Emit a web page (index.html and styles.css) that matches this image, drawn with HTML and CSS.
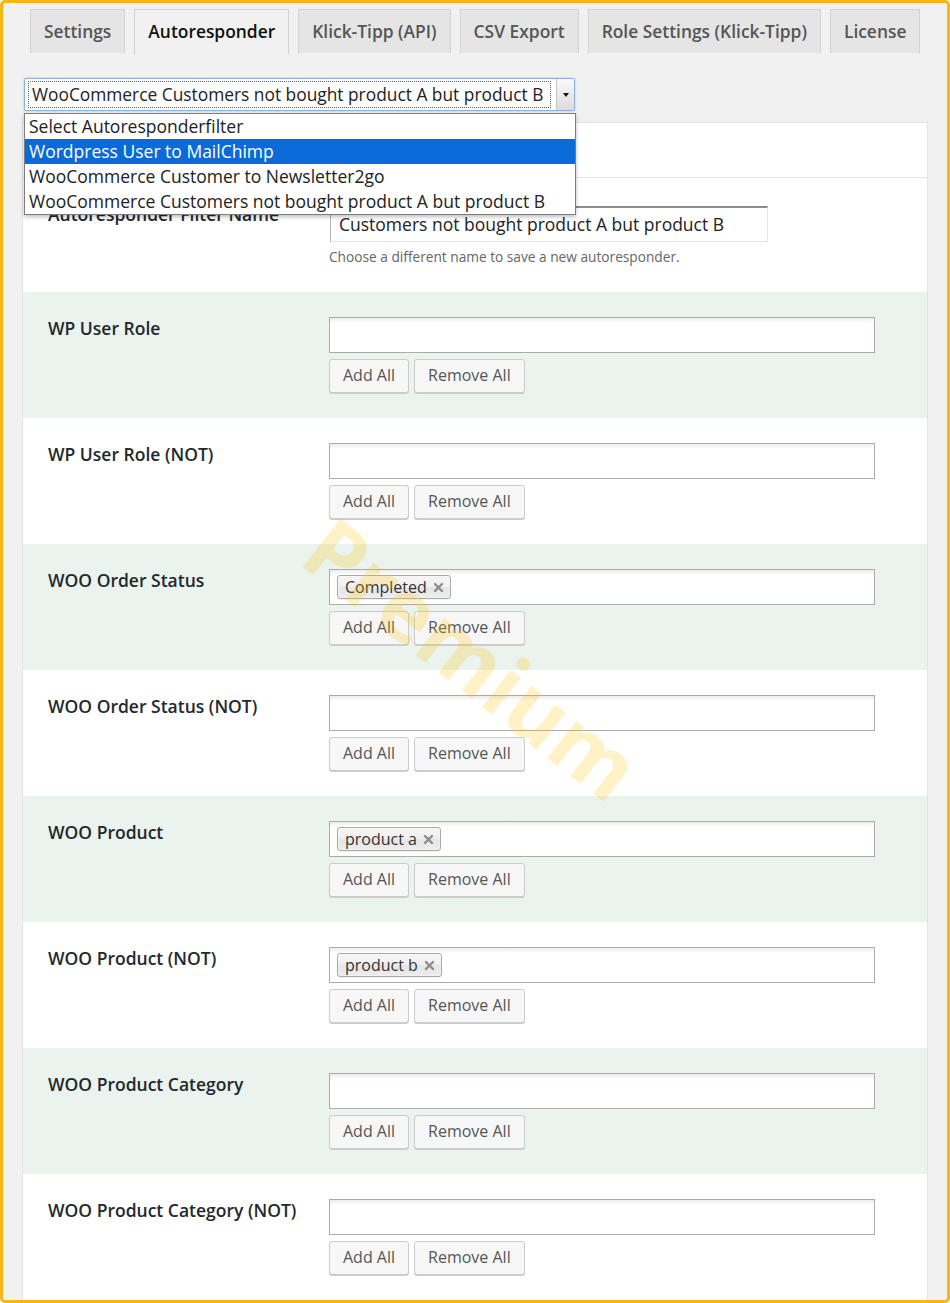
FILE: index.html
```html
<!DOCTYPE html>
<html>
<head>
<meta charset="utf-8">
<link rel="stylesheet" href="styles.css">
</head>
<body>
<div class="frame">
  <nav class="tabs">
    <span class="tab">Settings</span>
    <span class="tab active">Autoresponder</span>
    <span class="tab">Klick-Tipp (API)</span>
    <span class="tab">CSV Export</span>
    <span class="tab">Role Settings (Klick-Tipp)</span>
    <span class="tab">License</span>
  </nav>

  <div class="selector">
    <div class="select-box">
      <span class="select-value">WooCommerce Customers not bought product A but product B</span>
      <span class="select-arrow"><span class="tri"></span></span>
    </div>
    <ul class="dropdown">
      <li>Select Autoresponderfilter</li>
      <li class="hl">Wordpress User to MailChimp</li>
      <li>WooCommerce Customer to Newsletter2go</li>
      <li>WooCommerce Customers not bought product A but product B</li>
    </ul>
  </div>

  <div class="panel">
    <div class="panel-head"></div>

    <div class="row name-row">
      <div class="label">Autoresponder Filter Name</div>
      <div class="field">
        <div class="text-input">Customers not bought product A but product B</div>
        <p class="desc">Choose a different name to save a new autoresponder.</p>
      </div>
    </div>

    <div class="row alt">
      <div class="label">WP User Role</div>
      <div class="field">
        <div class="multi"></div>
        <div class="btns"><span class="btn">Add All</span><span class="btn">Remove All</span></div>
      </div>
    </div>

    <div class="row">
      <div class="label">WP User Role (NOT)</div>
      <div class="field">
        <div class="multi"></div>
        <div class="btns"><span class="btn">Add All</span><span class="btn">Remove All</span></div>
      </div>
    </div>

    <div class="row alt">
      <div class="label">WOO Order Status</div>
      <div class="field">
        <div class="multi"><span class="chip">Completed<svg class="x" width="11" height="11" viewBox="0 0 11 11"><path d="M2 2 L9 9 M9 2 L2 9" stroke="#8c8c8c" stroke-width="2.4" stroke-linecap="round"/></svg></span></div>
        <div class="btns"><span class="btn">Add All</span><span class="btn">Remove All</span></div>
      </div>
    </div>

    <div class="row">
      <div class="label">WOO Order Status (NOT)</div>
      <div class="field">
        <div class="multi"></div>
        <div class="btns"><span class="btn">Add All</span><span class="btn">Remove All</span></div>
      </div>
    </div>

    <div class="row alt">
      <div class="label">WOO Product</div>
      <div class="field">
        <div class="multi"><span class="chip">product a<svg class="x" width="11" height="11" viewBox="0 0 11 11"><path d="M2 2 L9 9 M9 2 L2 9" stroke="#8c8c8c" stroke-width="2.4" stroke-linecap="round"/></svg></span></div>
        <div class="btns"><span class="btn">Add All</span><span class="btn">Remove All</span></div>
      </div>
    </div>

    <div class="row">
      <div class="label">WOO Product (NOT)</div>
      <div class="field">
        <div class="multi"><span class="chip">product b<svg class="x" width="11" height="11" viewBox="0 0 11 11"><path d="M2 2 L9 9 M9 2 L2 9" stroke="#8c8c8c" stroke-width="2.4" stroke-linecap="round"/></svg></span></div>
        <div class="btns"><span class="btn">Add All</span><span class="btn">Remove All</span></div>
      </div>
    </div>

    <div class="row alt">
      <div class="label">WOO Product Category</div>
      <div class="field">
        <div class="multi"></div>
        <div class="btns"><span class="btn">Add All</span><span class="btn">Remove All</span></div>
      </div>
    </div>

    <div class="row">
      <div class="label">WOO Product Category (NOT)</div>
      <div class="field">
        <div class="multi"></div>
        <div class="btns"><span class="btn">Add All</span><span class="btn">Remove All</span></div>
      </div>
    </div>
  </div>

  <div class="watermark">Premium</div>
</div>
</body>
</html>
```

FILE: styles.css
```css
* { box-sizing: border-box; }
html, body { margin: 0; padding: 0; }
body {
  font-family: "Open Sans", "Noto Sans", sans-serif;
  color: #23282d;
  background: #ffffff;
}
.frame {
  position: relative;
  width: 950px;
  height: 1303px;
  border: 3px solid #f9b511;
  border-radius: 5px;
  background: #f1f1f1;
  overflow: hidden;
}

/* tabs */
.tabs {
  display: flex;
  gap: 9px;
  padding: 6px 0 0 27px;
  height: 50px;
  align-items: flex-start;
}
.tab {
  display: block;
  height: 44px;
  line-height: 42px;
  padding: 0 13px;
  font-size: 17.4px;
  font-weight: 600;
  color: #555;
  background: #e5e5e5;
  border: 1px solid #d2d2d2;
  border-bottom: none;
}
.tab.active {
  background: #f1f1f1;
  color: #111;
  height: 45px;
}

/* selector */
.selector {
  position: relative;
  margin: 25px 0 0 21px;
  height: 33px;
}
.select-box {
  display: flex;
  width: 551px;
  height: 33px;
  border: 1px solid #8eb2df;
  border-radius: 2px;
  background: #fff;
  box-shadow: 0 0 2px rgba(80, 140, 210, 0.5);
}
.select-value {
  flex: 1;
  margin: 2px 5px 2px 3px;
  padding-left: 3px;
  border: 1px dotted #666;
  font-size: 17.35px;
  line-height: 25px;
  color: #222;
  white-space: nowrap;
  overflow: hidden;
}
.select-arrow {
  width: 18px;
  display: flex;
  align-items: center;
  justify-content: center;
  background: linear-gradient(#fafafa, #dcdcdc);
  border-left: 1px solid #c4c4c4;
}
.tri {
  width: 0;
  height: 0;
  border-left: 3px solid transparent;
  border-right: 3px solid transparent;
  border-top: 4px solid #111;
}
.dropdown {
  position: absolute;
  z-index: 5;
  left: 0;
  top: 35px;
  width: 552px;
  margin: 0;
  padding: 0;
  list-style: none;
  background: #fff;
  border: 1px solid #7d7d7d;
  box-shadow: 0 2px 4px rgba(0, 0, 0, 0.25);
}
.dropdown li {
  height: 25px;
  line-height: 24px;
  padding-left: 4px;
  font-size: 17.5px;
  color: #222;
  white-space: nowrap;
}
.dropdown li.hl {
  background: #0a6ad8;
  color: #fff;
}

/* panel */
.panel {
  margin: 11px 19px 0 19px;
  background: #fff;
  border: 1px solid #e3e3e3;
}
.panel-head {
  height: 55px;
  border-bottom: 1px solid #e5e5e5;
}
.row {
  display: flex;
  height: 126px;
  padding: 25px 0 0 0;
}
.row.alt { background: #eaf3ee; }
.label {
  width: 306px;
  padding-left: 25px;
  font-size: 17.5px;
  font-weight: 600;
  line-height: 22px;
  color: #23282d;
}
.field { width: 546px; }

.name-row { height: 114px; padding-top: 28px; }
.name-row .label { margin-top: -3px; }
.text-input {
  width: 438px;
  height: 36px;
  margin-left: 1px;
  border-top: 2px solid #8d8d8d;
  border-left: 1px solid #b5b5b5;
  border-right: 1px solid #e4e4e4;
  border-bottom: 1px solid #e4e4e4;
  background: #fff;
  padding-left: 8px;
  font-size: 17.5px;
  line-height: 32px;
  color: #222;
}
.desc {
  margin: 6px 0 0 0;
  font-size: 13.7px;
  line-height: 18px;
  color: #666;
}

.multi {
  height: 36px;
  border: 1px solid #ababab;
  background: linear-gradient(#ececec 0, #fff 5px, #fff 100%);
  padding: 5px 0 0 7px;
}
.chip {
  display: inline-flex;
  align-items: center;
  height: 24px;
  padding: 0 6px 0 7px;
  border: 1px solid #a9a9a9;
  border-radius: 3px;
  background: linear-gradient(#f4f4f4 20%, #efefef 50%, #e6e6e6 52%, #ececec 100%);
  box-shadow: 0 0 2px #fff inset, 0 1px 0 rgba(0, 0, 0, 0.05);
  font-size: 16px;
  line-height: 22px;
  color: #333;
}
.chip .x {
  margin-left: 6px;
  display: block;
}

.btns {
  display: flex;
  gap: 5px;
  margin-top: 6px;
}
.btn {
  display: block;
  height: 34px;
  line-height: 31px;
  padding: 0 13px;
  font-size: 16px;
  color: #555;
  background: #f7f7f7;
  border: 1px solid #cccccc;
  border-radius: 3px;
  box-shadow: 0 1px 0 #cccccc;
}

/* watermark overlay */
.watermark {
  position: absolute;
  left: 470px;
  top: 655px;
  transform: translate(-50%, -50%) rotate(38deg);
  font-size: 86px;
  font-weight: 700;
  line-height: 1;
  color: rgba(255, 196, 0, 0.22);
  white-space: nowrap;
  pointer-events: none;
  z-index: 10;
}
```
